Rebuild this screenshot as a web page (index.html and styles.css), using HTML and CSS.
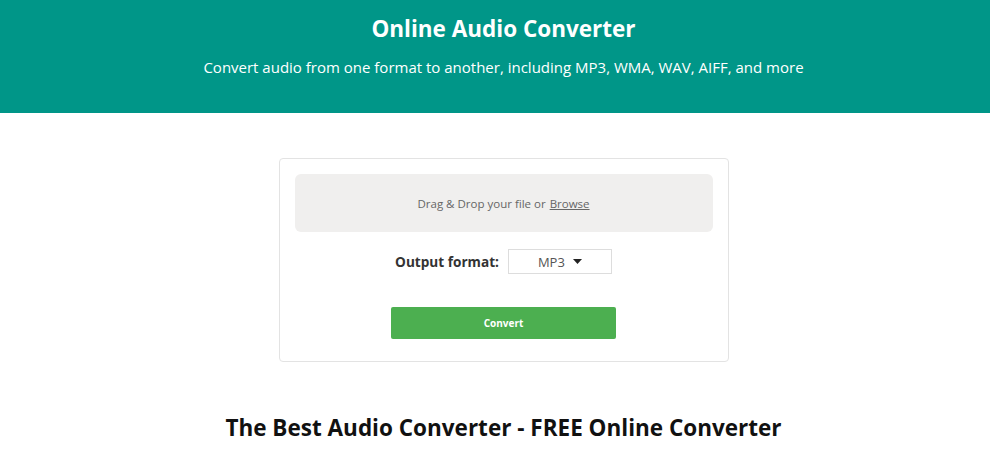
FILE: index.html
```html
<!DOCTYPE html>
<html lang="en">
  <head>
    <meta charset="UTF-8" />
    <meta name="viewport" content="width=device-width, initial-scale=1.0" />
    <title>Online Audio Converter</title>
    <link rel="stylesheet" href="styles.css">
  </head>
  <body>
    <!-- 顶部 -->
    <header class="top">
      <div class="inner">
        <h1>Online Audio Converter</h1>
        <p>Convert audio from one format to another, including MP3, WMA, WAV, AIFF, and more</p>
      </div>
    </header>

    <!-- 转换框 -->
    <main class="main">
      <form class="box" autocomplete="off">
        <div class="drop">
          Drag &amp; Drop your file or <a href="javascript:">Browse</a>
        </div>
        <div class="format">
          <label>Output format:</label>
          <div class="select">
            MP3
            <svg width="9" height="5" viewBox="0 0 9 5"><path d="M0 0h9L4.5 5z" fill="#222" /></svg>
          </div>
        </div>
        <button class="convert" type="button">Convert</button>
      </form>

      <h2 class="title">The Best Audio Converter - FREE Online Converter</h2>
    </main>
  </body>
</html>
```

FILE: styles.css
```css
* {
  margin: 0;
  padding: 0;
  box-sizing: border-box;
}

body {
  font-family: "Open Sans", "Liberation Sans", sans-serif;
  color: #333;
  background: #fff;
}

.top {
  height: 113px;
  background: #009688;
  color: #fff;
  text-align: center;
}

.top .inner,
.main {
  padding-left: 17px;
}

.top h1 {
  padding-top: 13px;
  font-size: 22.5px;
  font-weight: 700;
  line-height: 32px;
}

.top p {
  margin-top: 11px;
  font-size: 15px;
  line-height: 22px;
}

.main {
  padding-top: 45px;
}

.box {
  width: 450px;
  margin: 0 auto;
  padding: 15px 15px 22px;
  border: 1px solid #e3e3e3;
  border-radius: 4px;
}

.drop {
  height: 58px;
  display: flex;
  align-items: center;
  justify-content: center;
  background: #f0efee;
  border-radius: 6px;
  font-size: 11.5px;
  color: #666;
}

.drop a {
  color: #666;
  margin-left: 4px;
  text-decoration: underline;
}

.format {
  display: flex;
  align-items: center;
  justify-content: center;
  gap: 9px;
  margin-top: 17px;
}

.format label {
  font-size: 13.6px;
  font-weight: 700;
  color: #333;
}

.select {
  width: 104px;
  height: 25px;
  display: flex;
  align-items: center;
  justify-content: center;
  gap: 8px;
  border: 1px solid #ddd;
  font-size: 13px;
  color: #555;
}

.convert {
  display: block;
  width: 225px;
  height: 32px;
  margin: 33px auto 0;
  border: 0;
  border-radius: 2px;
  background: #4caf50;
  color: #fff;
  font-family: inherit;
  font-size: 10px;
  font-weight: 700;
  cursor: pointer;
}

.title {
  margin-top: 50px;
  text-align: center;
  font-size: 22.5px;
  font-weight: 700;
  color: #111;
}
```
